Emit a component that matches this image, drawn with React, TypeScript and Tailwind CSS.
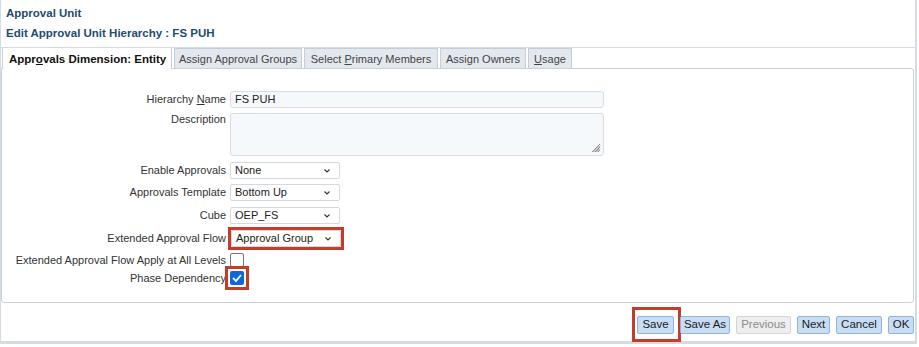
import React from "react";

const Chevron = () => (
  <svg width="8" height="6" viewBox="0 0 8 6" className="shrink-0">
    <path d="M1.5 1.5 L4 4 L6.5 1.5" fill="none" stroke="#333" strokeWidth="1.1" />
  </svg>
);

function Select({ value }: { value: string }) {
  return (
    <div className="w-[110px] h-[17px] bg-white border border-[#d3d9e0] rounded-[2px] flex items-center justify-between pl-[4px] pr-[8px] text-[#222]">
      <span>{value}</span>
      <Chevron />
    </div>
  );
}

function Row({ label, children, className = "" }: { label: React.ReactNode; children: React.ReactNode; className?: string }) {
  return (
    <div className={`flex items-center ${className}`}>
      <div className="w-[228px] pr-[4px] text-right text-[#333] whitespace-nowrap">
        <span>{label}</span>
      </div>
      <div>{children}</div>
    </div>
  );
}

export default function App() {
  const tabs = [
    { label: <>Assign Approval Groups</>, w: "w-[128px]" },
    { label: <>Select <u>P</u>rimary Members</>, w: "w-[134px]" },
    { label: <>Assign Owners</>, w: "w-[86px]" },
    { label: <><u>U</u>sage</>, w: "w-[44px]" },
  ];

  const buttons = [
    { label: "Save", w: "w-[37px]" },
    { label: "Save As", w: "w-[50px]" },
    { label: "Previous", w: "w-[55px]" },
    { label: "Next", w: "w-[33px]" },
    { label: "Cancel", w: "w-[46px]" },
    { label: "OK", w: "w-[26px]" },
  ];

  return (
    <div className="w-[919px] h-[347px] bg-white font-['Liberation_Sans',Arial,sans-serif] text-[11px] leading-none">
      <div className="w-[917px] h-[344px] border-r-2 border-b-[3px] border-l border-[#d5dbe2] flex flex-col">
        {/* Header */}
        <div className="h-[47px] px-[5px] pt-[8px] text-[#1f4b6e] font-bold text-[11.5px]">
          <div className="h-[12px]">Approval Unit</div>
          <div className="mt-[8px]">Edit Approval Unit Hierarchy : FS PUH</div>
        </div>

        {/* Tabs */}
        <div className="border-t border-[#d3dae2] h-[21px] flex items-end pl-[1px] whitespace-nowrap">
          <div className="w-[170px] h-[21px] border-l border-r border-[#c5ced8] bg-white flex items-center pl-[6px] pt-[2px] font-bold text-[11.5px] text-[#111] relative z-10 -mb-px">
            <span>
              Appr<u>o</u>vals Dimension: Entity
            </span>
          </div>
          {tabs.map((t, i) => (
            <div
              key={i}
              className={`${t.w} h-[20px] ml-[2px] pt-[2px] border border-b-0 border-[#c5ced8] bg-[#e3e8ee] flex items-center justify-center text-[#444]`}
            >
              <span>{t.label}</span>
            </div>
          ))}
        </div>

        {/* Panel */}
        <div className="w-[913px] h-[235px] border border-[#c8d0d9] rounded-b-[3px] rounded-tr-[3px] pt-[22px]">
          <Row label={<>Hierarchy <u>N</u>ame</>}>
            <div className="w-[374px] h-[17px] bg-[#f6f9fc] border border-[#d8dde3] rounded-[3px] flex items-center pl-[4px] text-[#222]">
              FS PUH
            </div>
          </Row>
          <div className="flex items-start mt-[5px]">
            <div className="w-[228px] pr-[4px] pt-[1px] text-right text-[#333]">Description</div>
            <div className="w-[374px] h-[43px] bg-[#f6f9fc] border border-[#d8dde3] rounded-[3px] relative">
              <svg width="10" height="10" viewBox="0 0 10 10" className="absolute right-[2px] bottom-[2px]">
                <path d="M9 1 L1 9 M9 4 L4 9 M9 7 L7 9 M9 2.5 L2.5 9 M9 5.5 L5.5 9" stroke="#777" strokeWidth="0.8" />
              </svg>
            </div>
          </div>
          <Row label="Enable Approvals" className="mt-[6px]">
            <Select value="None" />
          </Row>
          <Row label="Approvals Template" className="mt-[5px]">
            <Select value="Bottom Up" />
          </Row>
          <Row label="Cube" className="mt-[6px]">
            <Select value="OEP_FS" />
          </Row>
          <Row label="Extended Approval Flow" className="mt-[6px]">
            <div className="outline-[3px] outline-solid outline-[#c43d2c] outline-offset-[0px] ml-[1px]">
              <Select value="Approval Group" />
            </div>
          </Row>
          <Row label="Extended Approval Flow Apply at All Levels" className="mt-[6px]">
            <div className="w-[14px] h-[14px] border border-[#777] rounded-[2px] bg-white" />
          </Row>
          <Row label="Phase Dependency" className="mt-[4px]">
            <div className="outline-[3px] outline-solid outline-[#c43d2c] outline-offset-[2px]">
              <div className="w-[14px] h-[14px] rounded-[2px] bg-[#0e66d8] flex items-center justify-center">
                <svg width="10" height="8" viewBox="0 0 10 8">
                  <path d="M1 4 L4 7 L9 1" fill="none" stroke="#fff" strokeWidth="1.8" />
                </svg>
              </div>
            </div>
          </Row>
        </div>

        {/* Buttons */}
        <div className="flex justify-end gap-[6px] pr-[1px] mt-[13px]">
          {buttons.map((b) => {
            const disabled = b.label === "Previous";
            return (
              <div key={b.label} className="relative">
                <div
                  className={`${b.w} h-[18px] flex items-center justify-center border rounded-[2px] text-[11.5px] ${
                    disabled
                      ? "bg-[#eeeeee] border-[#d5d5d5] text-[#8a8a8a]"
                      : "bg-[#c8ddf3] border-[#8fb4dc] text-[#1a1a1a]"
                  }`}
                >
                  {b.label}
                </div>
                {b.label === "Save" && (
                  <span className="absolute -left-[5px] -right-[7px] -top-[9px] -bottom-[8px] border-[3px] border-[#c43d2c]" />
                )}
              </div>
            );
          })}
        </div>
      </div>
    </div>
  );
}
